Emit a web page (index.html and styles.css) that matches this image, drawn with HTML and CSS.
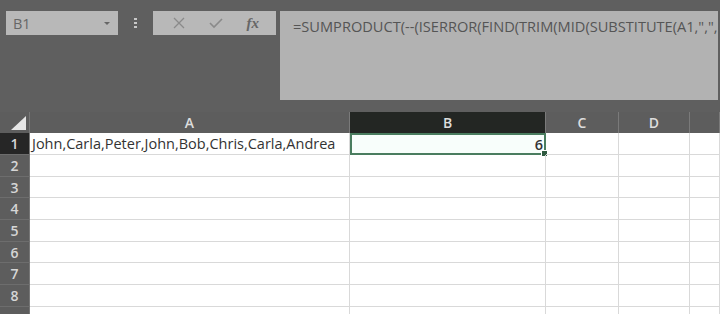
FILE: index.html
```html
<!DOCTYPE html>
<html lang="en">
<head>
    <meta charset="UTF-8">
    <title>Sheet</title>
    <link rel="stylesheet" href="styles.css">
</head>
<body>
    <div class="toolbar">
        <div class="name-box">
            <span>B1</span>
            <span class="arrow"></span>
        </div>
        <div class="grip">
            <i></i><i></i><i></i>
        </div>
        <div class="fx-box">
            <svg class="icon" width="14" height="14" viewBox="0 0 14 14"><path d="M2 2 L12 12 M12 2 L2 12" stroke="#8a8a8a" stroke-width="1.3" fill="none"/></svg>
            <svg class="icon" width="16" height="14" viewBox="0 0 16 14"><path d="M2 7 L6 11 L14 3" stroke="#8a8a8a" stroke-width="1.6" fill="none"/></svg>
            <span class="fx">fx</span>
        </div>
        <div class="formula">=SUMPRODUCT(--(ISERROR(FIND(TRIM(MID(SUBSTITUTE(A1,",",</div>
    </div>

    <div class="sheet">
        <div class="corner"><span class="tri"></span></div>
        <div class="col-head">A</div>
        <div class="col-head active">B</div>
        <div class="col-head">C</div>
        <div class="col-head">D</div>
        <div class="col-head"></div>

        <div class="row-head active">1</div>
        <div class="cell">John,Carla,Peter,John,Bob,Chris,Carla,Andrea</div>
        <div class="cell selected num">6<span class="handle"></span></div>
        <div class="cell"></div><div class="cell"></div><div class="cell"></div>

        <div class="row-head">2</div>
        <div class="cell"></div><div class="cell"></div><div class="cell"></div><div class="cell"></div><div class="cell"></div>
        <div class="row-head">3</div>
        <div class="cell"></div><div class="cell"></div><div class="cell"></div><div class="cell"></div><div class="cell"></div>
        <div class="row-head">4</div>
        <div class="cell"></div><div class="cell"></div><div class="cell"></div><div class="cell"></div><div class="cell"></div>
        <div class="row-head">5</div>
        <div class="cell"></div><div class="cell"></div><div class="cell"></div><div class="cell"></div><div class="cell"></div>
        <div class="row-head">6</div>
        <div class="cell"></div><div class="cell"></div><div class="cell"></div><div class="cell"></div><div class="cell"></div>
        <div class="row-head">7</div>
        <div class="cell"></div><div class="cell"></div><div class="cell"></div><div class="cell"></div><div class="cell"></div>
        <div class="row-head">8</div>
        <div class="cell"></div><div class="cell"></div><div class="cell"></div><div class="cell"></div><div class="cell"></div>
        <div class="row-head"></div>
        <div class="cell"></div><div class="cell"></div><div class="cell"></div><div class="cell"></div><div class="cell"></div>
    </div>
</body>
</html>
```

FILE: styles.css
```css
body {
    margin: 0;
    background-color: #5f5f5f;
    font-family: 'Open Sans', 'Liberation Sans', sans-serif;
    overflow: hidden;
}
.toolbar {
    display: flex;
    align-items: flex-start;
    height: 112px;
    padding: 11px 2px 0 6px;
    box-sizing: border-box;
}
.name-box {
    width: 112px;
    height: 24px;
    background-color: #b8b8b8;
    display: flex;
    align-items: center;
    justify-content: space-between;
    padding: 0 8px 0 7px;
    box-sizing: border-box;
    font-size: 14.5px;
    color: #666;
}
.arrow {
    width: 0;
    height: 0;
    border-left: 3px solid transparent;
    border-right: 3px solid transparent;
    border-top: 3px solid #666;
}
.grip {
    width: 35px;
    height: 24px;
    display: flex;
    flex-direction: column;
    align-items: center;
    justify-content: center;
    gap: 2px;
}
.grip i {
    width: 3px;
    height: 2px;
    background-color: #c8c8c8;
}
.fx-box {
    width: 123px;
    height: 24px;
    background-color: #b8b8b8;
    display: flex;
    align-items: center;
    justify-content: space-around;
    padding: 0 6px 0 8px;
    box-sizing: border-box;
}
.fx {
    font-family: 'Liberation Serif', serif;
    font-style: italic;
    font-weight: bold;
    font-size: 15px;
    color: #666;
}
.formula {
    margin-left: 4px;
    width: 438px;
    height: 89px;
    background-color: #b2b2b2;
    padding: 5px 0 0 13px;
    box-sizing: border-box;
    font-size: 14.6px;
    color: #555;
    white-space: nowrap;
    overflow: hidden;
}
.sheet {
    display: grid;
    grid-template-columns: 30px 320px 196px 73px 71px 1fr;
    grid-template-rows: 21px 22px 22px 21px 22px 22px 21px 22px 22px 22px;
    background-color: #fff;
}
.corner {
    background-color: #5d5d5d;
    position: relative;
    border-right: 1px solid #777;
}
.tri {
    position: absolute;
    right: 3px;
    bottom: 3px;
    width: 15px;
    height: 14px;
    background-color: #e6e6e6;
    clip-path: polygon(100% 0, 100% 100%, 0 100%);
}
.col-head {
    background-color: #5d5d5d;
    color: #ddd;
    font-size: 14px;
    font-weight: 600;
    text-align: center;
    line-height: 22px;
    border-right: 1px solid #7a7a7a;
    box-sizing: border-box;
}
.col-head.active {
    background-color: #232623;
}
.row-head {
    background-color: #5d5d5d;
    color: #d6d6d6;
    font-size: 14px;
    font-weight: 600;
    text-align: center;
    border-bottom: 1px solid #6d6d6d;
    border-right: 1px solid #777;
    box-sizing: border-box;
    display: flex;
    align-items: center;
    justify-content: center;
}
.row-head.active {
    background-color: #262626;
}
.cell {
    border-right: 1px solid #d9d9d9;
    border-bottom: 1px solid #d9d9d9;
    box-sizing: border-box;
    font-size: 14.5px;
    color: #333;
    padding: 0 2px;
    display: flex;
    align-items: center;
    white-space: nowrap;
    position: relative;
}
.cell.num {
    justify-content: flex-end;
    font-weight: 600;
}
.selected {
    border: 2px solid #4a7d5f;
    background-color: #f8fefb;
    padding-right: 1px;
}
.handle {
    position: absolute;
    right: -4px;
    bottom: -4px;
    width: 5px;
    height: 5px;
    background-color: #2e5a3f;
    border: 1px solid #fff;
}
```
